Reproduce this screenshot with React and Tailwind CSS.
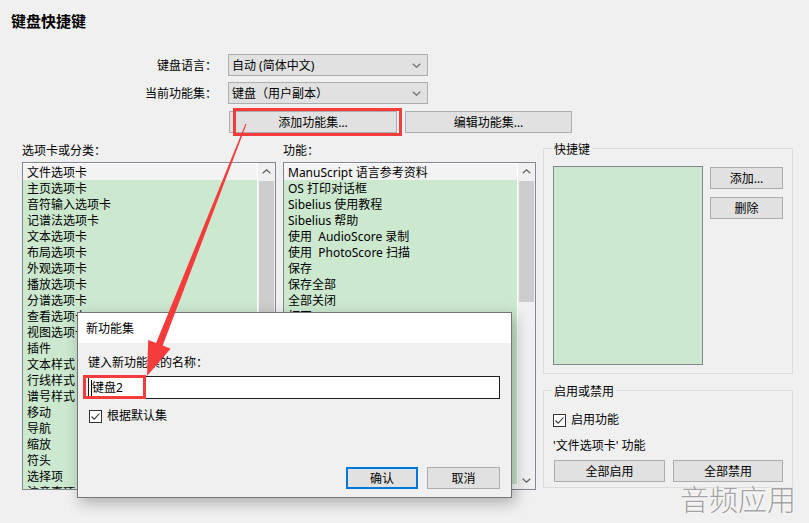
import React from "react";

const leftItems = [
  "文件选项卡",
  "主页选项卡",
  "音符输入选项卡",
  "记谱法选项卡",
  "文本选项卡",
  "布局选项卡",
  "外观选项卡",
  "播放选项卡",
  "分谱选项卡",
  "查看选项卡",
  "视图选项卡",
  "插件",
  "文本样式",
  "行线样式",
  "谱号样式",
  "移动",
  "导航",
  "缩放",
  "符头",
  "选择项",
  "注意事项",
];

const midItems = [
  "ManuScript 语言参考资料",
  "OS 打印对话框",
  "Sibelius 使用教程",
  "Sibelius 帮助",
  "使用  AudioScore 录制",
  "使用  PhotoScore 扫描",
  "保存",
  "保存全部",
  "全部关闭",
  "打开",
  "打开最近",
  "新建",
  "关闭",
  "退出",
  "导出",
  "打印",
  "导入",
  "共享",
  "另存为",
  "信息",
];

function Chevron({ up, className }) {
  return (
    <svg width="9" height="5" viewBox="0 0 9 5" className={className}>
      <path
        d={up ? "M0.7 4.3 L4.5 0.8 L8.3 4.3" : "M0.7 0.7 L4.5 4.2 L8.3 0.7"}
        fill="none"
        stroke="currentColor"
        strokeWidth="1.2"
      />
    </svg>
  );
}

function Combo({ value }) {
  return (
    <div className="w-[200px] h-[22px] bg-[#e1e1e1] border border-[#adadad] flex items-center justify-between pl-[3px] pr-[6px]">
      <span className="leading-[16px] pt-[2px]">{value}</span>
      <Chevron className="text-[#6d6d6d]" />
    </div>
  );
}

function Btn({ children, className = "" }) {
  return (
    <div
      className={`h-[22px] bg-[#e1e1e1] border border-[#adadad] flex items-center justify-center pt-[2px] leading-[16px] ${className}`}
    >
      {children}
    </div>
  );
}

function CheckBox() {
  return (
    <div className="w-[13px] h-[13px] border border-[#333] bg-white flex items-center justify-center">
      <svg width="11" height="11" viewBox="0 0 11 11">
        <path d="M1.5 5.5 L4.2 8.2 L9.5 2.5" fill="none" stroke="#333" strokeWidth="1.1" />
      </svg>
    </div>
  );
}

function ListBox({ items, thumb }) {
  return (
    <div className="h-[328px] border border-[#828790] bg-white flex overflow-hidden">
      <div className="flex-1 overflow-hidden pt-[1px] pr-[1px]">
        {items.map((t, i) => (
          <div
            key={i}
            className={`h-[16px] leading-[18px] pl-[4px] whitespace-pre overflow-hidden ${
              i === 0 ? "bg-[#f3f3f3]" : "bg-[#cce8cf]"
            }`}
          >
            {t}
          </div>
        ))}
      </div>
      <div className="w-[17px] bg-[#f0f0f0] flex flex-col">
        <div className="h-[17px] flex items-center justify-center text-[#606060]">
          <Chevron up />
        </div>
        <div className="flex-1 pt-[1px] px-[1px]">
          <div className={`bg-[#cdcdcd] ${thumb}`} />
        </div>
        <div className="h-[17px] flex items-center justify-center text-[#606060]">
          <Chevron />
        </div>
      </div>
    </div>
  );
}

function Group({ title, className, titleClass, children }) {
  return (
    <div className={`relative border border-[#dcdcdc] ${className}`}>
      <span className={`absolute left-[8px] bg-[#f0f0f0] px-[2px] leading-[16px] ${titleClass}`}>
        {title}
      </span>
      {children}
    </div>
  );
}

export default function App() {
  return (
    <div className="relative w-[809px] h-[523px] overflow-hidden bg-[#f0f0f0] text-[12px] text-black font-['Noto_Sans','Noto_Sans_CJK_SC',sans-serif]">
      <div className="pt-[11px] pl-[11px] h-[30px] text-[15px] font-bold leading-[20px]">键盘快捷键</div>

      {/* language / feature set */}
      <div className="mt-[24px] flex items-center">
        <div className="w-[217px] text-right leading-[16px] pt-[2px]">键盘语言：</div>
        <div className="ml-[11px]">
          <Combo value="自动 (简体中文)" />
        </div>
      </div>
      <div className="mt-[6px] flex items-center">
        <div className="w-[217px] text-right leading-[16px] pt-[2px]">当前功能集：</div>
        <div className="ml-[11px]">
          <Combo value="键盘（用户副本）" />
        </div>
      </div>
      <div className="mt-[7px] ml-[229px] flex gap-[8px]">
        <Btn className="w-[168px]">添加功能集…</Btn>
        <Btn className="w-[167px]">编辑功能集…</Btn>
      </div>

      {/* lists + groups */}
      <div className="mt-[9px] pl-[22px] flex gap-[7px] items-start">
        <div className="w-[254px]">
          <div className="h-[20px] pt-[1px] leading-[16px]">选项卡或分类：</div>
          <ListBox items={leftItems} thumb="h-[160px]" />
        </div>
        <div className="w-[253px]">
          <div className="h-[20px] pt-[1px] leading-[16px]">功能：</div>
          <ListBox items={midItems} thumb="h-[121px]" />
        </div>
        <div className="w-[250px]">
          <Group title="快捷键" className="mt-[6px] h-[226px] pt-[17px] pl-[9px] flex" titleClass="-top-[7px]">
            <div className="w-[150px] h-[199px] border border-[#828790] bg-[#cce8cf]" />
            <div className="ml-[7px] mt-[1px] flex flex-col gap-[8px]">
              <Btn className="w-[73px]">添加…</Btn>
              <Btn className="w-[73px]">删除</Btn>
            </div>
          </Group>
          <Group title="启用或禁用" className="mt-[16px] h-[98px] pt-[21px] pl-[9px]" titleClass="-top-[7px]">
            <div className="flex items-center gap-[5px]">
              <CheckBox />
              <span className="leading-[16px]">启用功能</span>
            </div>
            <div className="mt-[10px] leading-[16px]">'文件选项卡' 功能</div>
            <div className="mt-[6px] ml-[1px] flex gap-[8px]">
              <Btn className="w-[111px] h-[21px]">全部启用</Btn>
              <Btn className="w-[110px] h-[21px]">全部禁用</Btn>
            </div>
          </Group>
        </div>
      </div>

      {/* dialog */}
      <div className="absolute left-[77px] top-[312px] w-[435px] h-[186px] border border-[#767676] bg-[#f0f0f0] shadow-[3px_5px_14px_rgba(0,0,0,0.28)]">
        <div className="h-[30px] bg-white pl-[8px] pt-[1px] leading-[30px]">新功能集</div>
        <div className="pl-[10px] pt-[12px]">
          <div className="leading-[16px]">键入新功能集的名称：</div>
          <div className="mt-[5px] w-[412px] h-[23px] border border-[#1e1e1e] bg-white flex items-center pl-[2px]">
            <span className="w-[1px] h-[16px] bg-black" />
            <span className="leading-[16px] pt-[1px]">键盘2</span>
          </div>
          <div className="mt-[9px] ml-[1px] flex items-center gap-[5px]">
            <CheckBox />
            <span className="leading-[16px]">根据默认集</span>
          </div>
          <div className="mt-[43px] pr-[11px] flex justify-end gap-[9px]">
            <div className="w-[72px] h-[22px] border-2 border-[#0078d7] bg-[#e1e1e1] flex items-center justify-center pt-[2px] leading-[16px]">
              确认
            </div>
            <Btn className="w-[73px]">取消</Btn>
          </div>
        </div>
      </div>

      {/* annotations */}
      <svg className="absolute left-0 top-0 pointer-events-none" width="809" height="523" viewBox="0 0 809 523">
        <rect x="234.5" y="109.5" width="166" height="25" fill="none" stroke="#f43c3c" strokeWidth="3" />
        <rect x="84.5" y="376.5" width="60" height="21" fill="none" stroke="#f43c3c" strokeWidth="3" />
        <polygon
          points="245.5,123.8 246.5,124.2 162.7,345.6 170.6,348.7 147,376 148.2,339.9 156.1,343.0"
          fill="#f43c3c"
        />
      </svg>

      <div className="absolute left-[680px] top-[482px] text-[29px] leading-[32px] font-light text-[#a3a3a3] [text-shadow:0_0_2px_#fff,0_0_2px_#fff] font-['Noto_Sans_CJK_SC',sans-serif]">
        音频应用
      </div>
    </div>
  );
}
